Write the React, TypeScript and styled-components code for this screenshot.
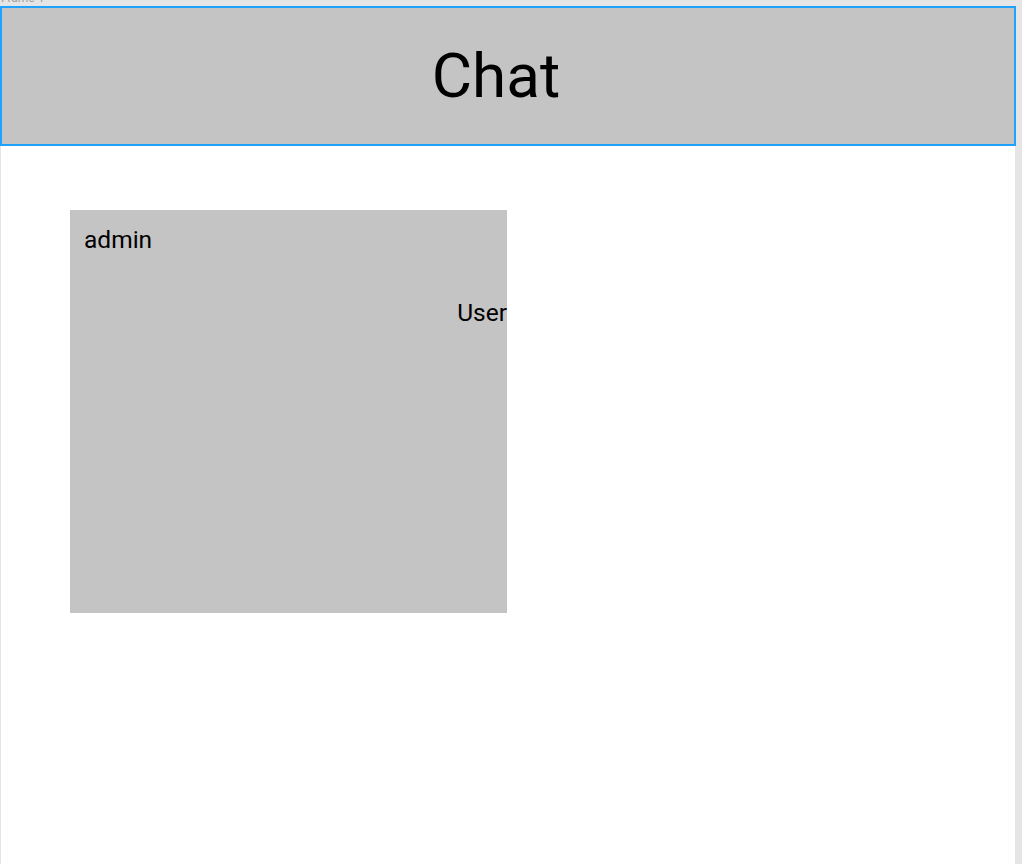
import React from "react";
import styled, { createGlobalStyle } from "styled-components";

const Global = createGlobalStyle`
  html, body { margin: 0; padding: 0; }
  body {
    background: #e5e5e5;
    font-family: Roboto, "Liberation Sans", sans-serif;
    overflow: hidden;
  }
`;

const Canvas = styled.div`
  width: 1022px;
  height: 864px;
  display: flex;
  flex-direction: column;
  background: #e5e5e5;
  overflow: hidden;
`;

const LabelStrip = styled.div`
  height: 6px;
  overflow: hidden;
  padding-left: 1px;
`;

const FrameLabel = styled.div`
  font-size: 12px;
  line-height: 14px;
  color: #a0a0a0;
  margin-top: -9px;
`;

const FrameRow = styled.div`
  flex: 1;
  display: flex;
  padding-left: 1px;
`;

const Frame = styled.div`
  width: 1014px;
  background: #ffffff;
  display: flex;
  flex-direction: column;
`;

const Header = styled.header`
  height: 140px;
  box-sizing: border-box;
  margin: 0 -1px;
  border: 2px solid #1fa2fc;
  background: #c4c4c4;
  display: flex;
  align-items: center;
  justify-content: center;
  padding: 0 24px 0 0;
`;

const Title = styled.h1`
  margin: 0;
  font-weight: 400;
  font-size: 62px;
  color: #000;
  line-height: 1;
`;

const Body = styled.main`
  padding: 64px 0 0 69px;
`;

const ChatCard = styled.section`
  width: 437px;
  height: 403px;
  box-sizing: border-box;
  background: #c4c4c4;
  padding: 16px 0 0 14px;
  display: flex;
  flex-direction: column;
`;

const Message = styled.div<{ $mine?: boolean }>`
  font-size: 24.5px;
  line-height: 28px;
  color: #000;
  text-align: ${(p) => (p.$mine ? "right" : "left")};
  margin-top: ${(p) => (p.$mine ? "45px" : "0")};
`;

export default function App() {
  return (
    <>
      <Global />
      <Canvas>
        <LabelStrip>
          <FrameLabel>Frame 1</FrameLabel>
        </LabelStrip>
        <FrameRow>
          <Frame>
            <Header>
              <Title>Chat</Title>
            </Header>
            <Body>
              <ChatCard>
                <Message>admin</Message>
                <Message $mine>User</Message>
              </ChatCard>
            </Body>
          </Frame>
        </FrameRow>
      </Canvas>
    </>
  );
}
